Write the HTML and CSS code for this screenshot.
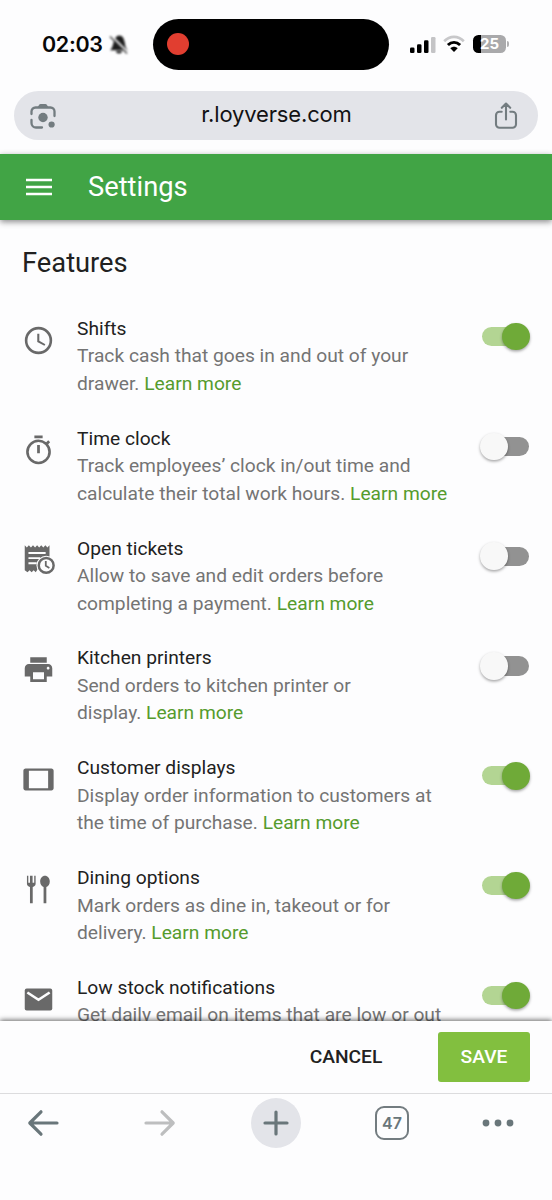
FILE: index.html
```html
<!DOCTYPE html>
<html lang="en">
<head>
<meta charset="utf-8">
<title>Settings</title>
<link rel="stylesheet" href="styles.css">
</head>
<body>
<div class="phone">
  <div class="status">
    <span class="time">02:03</span>
    <svg class="bell" width="22" height="22" viewBox="0 0 22 22"><path d="M2 17.200c1.800-1.400 2.500-3.500 3.400-7.200C6.300 6 8 3 11 2.500c4 0 5 3.500 5.900 7.500.3 3.500 1 5.700 3 7.200zM8 18h6c-.3 1.800-1.200 2.500-3 2.500s-2.700-.7-3-2.500z" fill="#1c1c1c"/><path d="M3 2.500l17 17" stroke="#fdfdfe" stroke-width="1.800"/><path d="M2 3.500l17 17" stroke="#333" stroke-width="1.200"/></svg>
    <div class="island"><span class="rec"></span></div>
    <svg class="signal" width="26" height="18" viewBox="0 0 26 18"><rect x="0" y="11.500" width="4.500" height="5.500" rx="1.300"/><rect x="7" y="8.200" width="4.500" height="8.800" rx="1.300"/><rect x="14" y="4.300" width="4.500" height="12.700" rx="1.300"/><rect x="21" y="1" width="4.500" height="16" rx="1.300" fill="#c4c4c6"/></svg>
    <svg class="wifi" width="22" height="18" viewBox="0 0 22 18"><path d="M1.200 6.200C6.800.5 15.200.5 20.800 6.200" fill="none" stroke="#c8c8ca" stroke-width="2.700"/><path d="M4.900 10C8.600 6.500 13.400 6.500 17.100 10" fill="none" stroke="#000" stroke-width="3"/><path d="M7.300 13.200c2.200-2 5.200-2 7.400 0L11 17z"/></svg>
    <div class="battery"><span class="cell">25</span><span class="cap"></span></div>
  </div>
  <div class="address">
    <svg width="28" height="28" viewBox="0 0 28 28"><g fill="none" stroke="#737c80" stroke-width="2.300" stroke-linecap="round"><path d="M2.500 12V9.500A4 4 0 0 1 6.500 5.500h15a4 4 0 0 1 4 4V14"/><path d="M2.500 18v3a4.500 4.500 0 0 0 4.500 4.500h6"/></g><path d="M8.500 5.500 10 3q.5-1 1.700-1h4.600q1.200 0 1.700 1l1.500 2.500z" fill="#737c80"/><circle cx="14" cy="15.500" r="4.700" fill="#737c80"/><circle cx="22.600" cy="22.500" r="3.100" fill="#737c80"/></svg>
    <span class="url">r.loyverse.com</span>
    <svg width="26" height="28" viewBox="0 0 26 28"><g fill="none" stroke="#737c80" stroke-width="2.100" stroke-linecap="round" stroke-linejoin="round"><path d="M8.700 9.700H6.500a3.500 3.500 0 0 0-3.500 3.500v9a3.500 3.500 0 0 0 3.500 3.500h13a3.500 3.500 0 0 0 3.500-3.500v-9a3.500 3.500 0 0 0-3.500-3.500h-2.200M13 17.500V2M8.800 5.800 13 1.600l4.200 4.200"/></g></svg>
  </div>
  <header class="appbar">
    <svg width="26" height="18" viewBox="0 0 26 18"><path d="M0 2h26M0 9h26M0 16h26" stroke="#fff" stroke-width="2.600"/></svg>
    <h1>Settings</h1>
  </header>
  <main class="content">
    <h2>Features</h2>
    <section class="feature">
      <svg class="icon" viewBox="0 0 24 24"><circle cx="12" cy="12" r="9" fill="none" stroke="#696969" stroke-width="1.900"/><path d="M12.600 7H11.100v6l5.200 2.900.7-1.200-4.400-2.500z"/></svg>
      <div class="copy"><h3>Shifts</h3><p>Track cash that goes in and out of your<br>drawer. <a>Learn more</a></p></div>
      <span class="toggle on"></span>
    </section>
    <section class="feature">
      <svg class="icon" viewBox="0 0 24 24"><path d="M15 1H9v2h6zM11 14h2V8h-2zm8.030-6.610 1.420-1.420c-.43-.51-.9-.99-1.410-1.410l-1.420 1.420A8.960 8.960 0 0 0 12 4a9 9 0 1 0 7.030 3.390zM12 20.100a7.100 7.100 0 1 1 0-14.200 7.100 7.100 0 0 1 0 14.200z"/></svg>
      <div class="copy"><h3>Time clock</h3><p>Track employees’ clock in/out time and<br>calculate their total work hours. <a>Learn more</a></p></div>
      <span class="toggle"></span>
    </section>
    <section class="feature">
      <svg class="icon" viewBox="0 0 24 24"><path d="M2 1.700l1.500 1.500L5 1.700l1.500 1.500L8 1.700l1.500 1.500L11 1.700l1.500 1.500L14 1.700l1.500 1.500L17 1.700l1.500 1.500L20 1.700V10.500H2zM2 10h15l-7 11.300-1.500-1.500L7 21.300l-1.500-1.500L4 21.300l-2-1.500z"/><path d="M4.700 7.300h12.500M4.700 11h8.500M4.700 14.700h6" stroke="#fdfdfe" stroke-width="1.400"/><circle cx="17.600" cy="16.300" r="7.100" fill="#fdfdfe"/><circle cx="17.600" cy="16.300" r="5.400" fill="#fdfdfe" stroke="#696969" stroke-width="1.800"/><path d="M17.300 13v3.500l2.600 1.600" fill="none" stroke="#696969" stroke-width="1.300"/></svg>
      <div class="copy"><h3>Open tickets</h3><p>Allow to save and edit orders before<br>completing a payment. <a>Learn more</a></p></div>
      <span class="toggle"></span>
    </section>
    <section class="feature">
      <svg class="icon" viewBox="0 0 24 24"><path d="M19 8H5c-1.660 0-3 1.340-3 3v6h4v4h12v-4h4v-6c0-1.660-1.340-3-3-3zm-3 11H8v-5h8v5zm3-7c-.55 0-1-.45-1-1s.45-1 1-1 1 .45 1 1-.45 1-1 1zm-1-9H6v4h12V3z"/></svg>
      <div class="copy"><h3>Kitchen printers</h3><p>Send orders to kitchen printer or<br>display. <a>Learn more</a></p></div>
      <span class="toggle"></span>
    </section>
    <section class="feature">
      <svg class="icon" viewBox="0 0 24 24"><path fill-rule="evenodd" d="M2.600 4h18.800C22.300 4 23 4.700 23 5.600v12.800c0 .9-.7 1.600-1.600 1.600H2.600C1.700 20 1 19.300 1 18.400V5.600C1 4.700 1.700 4 2.600 4zM5 5.700v12.600h14V5.700z"/></svg>
      <div class="copy"><h3>Customer displays</h3><p>Display order information to customers at<br>the time of purchase. <a>Learn more</a></p></div>
      <span class="toggle on"></span>
    </section>
    <section class="feature">
      <svg class="icon" viewBox="0 0 24 24"><path d="M3.600 2h1v5h1.200V2h1.900v5h1.200V2h1v5.800c0 1.200-.9 2-2.100 2.300V22H5.800V10.100c-1.300-.3-2.200-1.100-2.200-2.300zM16.700 2c2 0 3.500 1.900 3.500 4.200 0 2-1 3.500-2.500 3.900V22h-2V10.100c-1.400-.4-2.500-1.900-2.500-3.900C13.200 3.900 14.700 2 16.700 2z"/></svg>
      <div class="copy"><h3>Dining options</h3><p>Mark orders as dine in, takeout or for<br>delivery. <a>Learn more</a></p></div>
      <span class="toggle on"></span>
    </section>
    <section class="feature">
      <svg class="icon" viewBox="0 0 24 24"><rect x="2" y="4" width="20" height="16" rx="1.400"/><path d="M3.900 6.900 12 12.200l8.100-5.300" fill="none" stroke="#fdfdfe" stroke-width="1.900"/></svg>
      <div class="copy"><h3>Low stock notifications</h3><p>Get daily email on items that are low or out</p></div>
      <span class="toggle on"></span>
    </section>
  </main>
  <footer class="actions">
    <button class="cancel">CANCEL</button>
    <button class="save">SAVE</button>
  </footer>
  <nav class="browser">
    <svg width="32" height="28" viewBox="0 0 32 28"><path d="M30 14H3M14 2.800 2.800 14 14 25.200" fill="none" stroke="#69767a" stroke-width="3.200" stroke-linecap="round" stroke-linejoin="round"/></svg>
    <svg class="forward" width="32" height="28" viewBox="0 0 32 28"><path d="M2 14H29M18 2.800 29.200 14 18 25.200" fill="none" stroke="#bdbebf" stroke-width="3.200" stroke-linecap="round" stroke-linejoin="round"/></svg>
    <span class="plus"><svg width="26" height="26" viewBox="0 0 26 26"><path d="M13 2v22M2 13h22" stroke="#69767a" stroke-width="3.200" stroke-linecap="round"/></svg></span>
    <span class="tabs">47</span>
    <svg class="more" width="32" height="8" viewBox="0 0 32 8" fill="#69767a"><circle cx="4" cy="4" r="3.400"/><circle cx="16" cy="4" r="3.400"/><circle cx="28" cy="4" r="3.400"/></svg>
  </nav>
</div>
</body>
</html>
```
FILE: styles.css
```css
* { box-sizing: border-box; margin: 0; }
body { background: #fdfdfe; }
svg { display: block; flex: none; }
.phone { width: 552px; height: 1200px; overflow: hidden; display: flex; flex-direction: column; font-family: Roboto, sans-serif; color: #212121; }
.status { height: 91px; flex: none; display: flex; align-items: center; padding: 0 0 3px 42px; }
.time { width: 66px; font: 600 21.500px Inter, sans-serif; letter-spacing: -.35px; color: #080808; white-space: nowrap; }
.bell { filter: blur(1px); }
.island { width: 236px; height: 51px; margin-left: 23px; border-radius: 26px; background: #000; display: flex; align-items: center; padding-left: 14px; flex: none; }
.rec { width: 22px; height: 22px; border-radius: 50%; background: #e13e30; }
.signal { margin: 1px 0 0 21px; }
.wifi { margin-left: 7px; }
.battery { display: flex; align-items: center; margin-left: 8px; }
.cell { width: 33px; height: 18px; border-radius: 5.500px; background: linear-gradient(90deg, #000 8px, #a9a9ab 8px); color: #fff; font: 700 15px/18px Inter, sans-serif; text-align: center; }
.cap { width: 2px; height: 6px; margin-left: 1px; border-radius: 0 2px 2px 0; background: #b0b0b2; }
.address { height: 49px; flex: none; margin: 0 14px; padding: 0 19px 0 15px; border-radius: 24.500px; background: #e3e4e9; display: flex; align-items: center; justify-content: space-between; }
.url { font: 400 22px Inter, sans-serif; letter-spacing: -.15px; color: #121214; padding: 0 0 3px 3px; }
.appbar { height: 66px; flex: none; margin-top: 14px; padding-left: 26px; display: flex; align-items: center; gap: 36px; background: #41a445; color: #fff; box-shadow: 0 2px 6px rgba(0, 0, 0, .45); }
h1 { font-size: 27.300px; font-weight: 400; }
.content { height: 801px; flex: none; overflow: hidden; padding: 26px 22px 0; }
h2 { font-size: 27.300px; line-height: 34px; font-weight: 400; margin-bottom: 35px; }
.feature { height: 109.840px; display: flex; align-items: flex-start; }
.icon { width: 33px; height: 33px; margin-top: 8.800px; fill: #696969; }
.copy { flex: 1; padding-left: 22px; white-space: nowrap; font-size: 19.220px; line-height: 27.460px; }
h3 { font-size: inherit; font-weight: 400; }
p { color: #747474; }
a { color: #559b2d; }
.toggle { width: 49.500px; height: 27.500px; margin-top: 7.800px; display: flex; align-items: center; }
.toggle::before { content: ""; width: 46.700px; height: 19.200px; margin: 0 1.400px; border-radius: 10px; background: #929292; flex: none; }
.toggle::after { content: ""; width: 27.500px; height: 27.500px; margin-left: -49.500px; border-radius: 50%; background: #f8f8f8; box-shadow: 0 1.500px 3px rgba(0, 0, 0, .35); flex: none; }
.toggle.on::before { background: #b3d593; }
.toggle.on::after { margin-left: -27.500px; background: #6faa38; }
.actions { height: 72px; flex: none; display: flex; align-items: center; justify-content: flex-end; padding: 0 22px 0 0; background: #fdfdfe; box-shadow: 0 -1px 5px rgba(0, 0, 0, .6); position: relative; }
button { border: 0; font: 500 19.220px Roboto, sans-serif; padding: 0 0 2px; }
.cancel { width: 92px; margin-right: 46px; background: none; color: #212121; }
.save { width: 92px; height: 50px; border-radius: 3px; background: #82bf3f; color: #fff; }
.browser { flex: 1; display: flex; align-items: flex-start; border-top: 1px solid #dcdcde; background: #fdfdfe; position: relative; padding: 4px 0 0 27px; }
.browser > svg { height: 50px; }
.browser .forward { margin-left: 85px; }
.browser .more { margin-left: 73px; }
.plus { width: 50px; height: 50px; border-radius: 50%; background: #e3e4e9; display: grid; place-items: center; margin-left: 75px; }
.tabs { width: 34px; height: 34px; margin: 8px 0 0 74px; border: 2.500px solid #737c80; border-radius: 9px; color: #69767a; font: 600 16px/30px Inter, sans-serif; text-align: center; }
```
